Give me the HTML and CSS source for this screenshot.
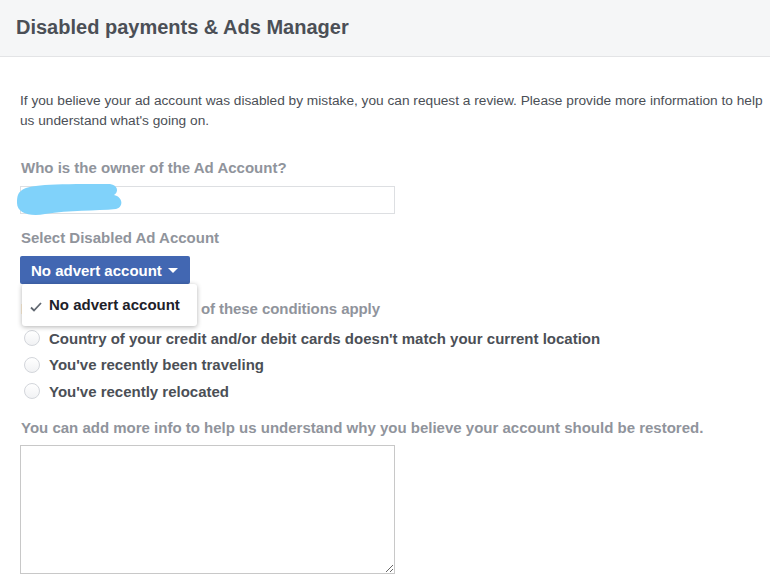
FILE: index.html
```html
<!DOCTYPE html>
<html lang="en">
<head>
    <meta charset="UTF-8">
    <meta name="viewport" content="width=device-width, initial-scale=1.0">
    <title>Disabled payments &amp; Ads Manager</title>
    <link rel="stylesheet" href="styles.css">
</head>
<body>
    <header class="page-header">
        <h1>Disabled payments &amp; Ads Manager</h1>
    </header>

    <main class="content">
        <p class="intro">If you believe your ad account was disabled by mistake, you can request a review. Please provide more information to help us understand what's going on.</p>

        <label class="field-label owner-label" for="owner">Who is the owner of the Ad Account?</label>
        <div class="owner-field">
            <input id="owner" class="text-input" type="text">
            <!-- name blotted out with a marker -->
            <svg class="scribble" width="110" height="36" viewBox="14 182 110 36">
                <path d="M22,190 C30,184 60,184 110,184 C118,185 119,192 114,195 C123,197 124,207 116,209 C95,211 70,210 45,214 C30,217 17,213 17,203 C17,196 18,193 22,190 Z" fill="#80d2fa"/>
            </svg>
        </div>

        <label class="field-label account-label">Select Disabled Ad Account</label>
        <div class="account-select">
            <button class="select-btn">No advert account <span class="caret"></span></button>
            <ul class="select-menu">
                <li class="selected">
                    <svg class="check" width="12" height="10" viewBox="0 0 12 10">
                        <path d="M1,5.5 L4,8.5 L11,1" fill="none" stroke="#606770" stroke-width="1.8"/>
                    </svg>
                    No advert account
                </li>
            </ul>
        </div>

        <div class="field-label conditions-label">Please check if any or all of these conditions apply</div>
        <ul class="conditions">
            <li><span class="radio"></span>Country of your credit and/or debit cards doesn't match your current location</li>
            <li><span class="radio"></span>You've recently been traveling</li>
            <li><span class="radio"></span>You've recently relocated</li>
        </ul>

        <label class="field-label details-label" for="details">You can add more info to help us understand why you believe your account should be restored.</label>
        <textarea id="details" class="details"></textarea>
    </main>
</body>
</html>
```

FILE: styles.css
```css
* {
    margin: 0;
    padding: 0;
    box-sizing: border-box;
    font-family: "Liberation Sans", Arial, sans-serif;
}

body {
    background: #fff;
    color: #4b4f56;
    overflow: hidden;
}

.page-header {
    height: 57px;
    background: #f5f6f7;
    border-bottom: 1px solid #e3e4e6;
    padding: 15px 16px 0;
}

.page-header h1 {
    font-size: 20px;
    line-height: 24px;
    font-weight: bold;
    color: #4b4f56;
}

.content {
    padding: 34px 0 0 20px;
}

.intro {
    font-size: 13.7px;
    line-height: 20px;
    color: #4b4f56;
}

.field-label {
    display: block;
    font-size: 15px;
    line-height: 20px;
    font-weight: bold;
    color: #90949c;
    padding-left: 1px;
}

.owner-label {
    margin-top: 27px;
}

.owner-field {
    position: relative;
    margin-top: 8px;
    width: 375px;
}

.text-input {
    display: block;
    width: 375px;
    height: 28px;
    border: 1px solid #dddfe2;
    outline: none;
}

.scribble {
    position: absolute;
    left: -6px;
    top: -4px;
}

.account-label {
    margin-top: 14px;
}

.account-select {
    position: relative;
    margin-top: 8px;
}

.select-btn {
    display: flex;
    align-items: center;
    height: 28px;
    padding: 0 12px 0 11px;
    background: #4267b2;
    color: #fff;
    border: none;
    border-radius: 2px;
    font-size: 15px;
    font-weight: bold;
}

.caret {
    margin-left: 6px;
    width: 0;
    height: 0;
    border-left: 5px solid transparent;
    border-right: 5px solid transparent;
    border-top: 5px solid #fff;
    margin-top: 1px;
}

.select-menu {
    position: absolute;
    left: 2px;
    top: 28px;
    width: 175px;
    height: 42px;
    list-style: none;
    background: #fff;
    border-radius: 3px;
    box-shadow: 0 1px 5px rgba(0, 0, 0, 0.3);
    z-index: 2;
}

.select-menu li {
    display: flex;
    align-items: center;
    height: 41px;
    padding-left: 8px;
    font-size: 15px;
    font-weight: bold;
    color: #1d2129;
}

.check {
    margin-right: 7px;
    margin-top: 4px;
}

.conditions-label {
    margin-top: 15px;
    letter-spacing: -0.07px;
}

.conditions {
    list-style: none;
    margin-top: 6px;
}

.conditions li {
    display: flex;
    align-items: center;
    height: 26.5px;
    font-size: 15px;
    font-weight: bold;
    color: #4b4f56;
}

.radio {
    width: 16px;
    height: 16px;
    margin: 0 9px 0 4px;
    border-radius: 50%;
    border: 1px solid #d3d6db;
    background: linear-gradient(#fff, #f1f2f4);
}

.details-label {
    margin-top: 13px;
}

.details {
    display: block;
    margin-top: 7px;
    width: 375px;
    height: 129px;
    border: 1px solid #c8c8c8;
    outline: none;
}
```
